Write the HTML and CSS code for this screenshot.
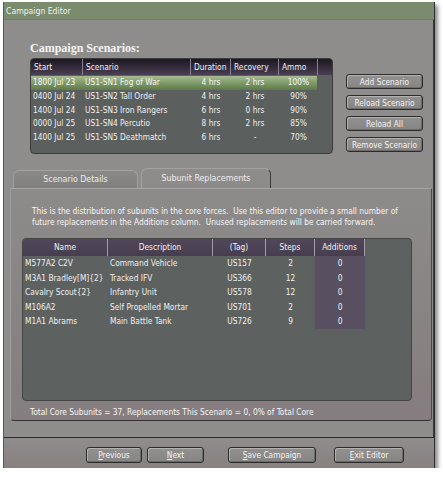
FILE: index.html
```html
<!DOCTYPE html>
<html>
<head>
<meta charset="utf-8">
<title>Campaign Editor</title>
<link rel="stylesheet" href="styles.css">
</head>
<body>
<div class="window">
  <div class="titlebar">Campaign Editor</div>
  <div class="content">
    <div class="top">
      <h1 class="heading">Campaign Scenarios:</h1>
      <div class="list-row">
        <div class="scen-list">
          <div class="srow shead">
            <span>Start</span><span>Scenario</span><span>Duration</span><span>Recovery</span><span>Ammo</span><span></span>
          </div>
          <div class="srow sel">
            <span>1800 Jul 23</span><span>US1-SN1 Fog of War</span><span class="c">4 hrs</span><span class="c">2 hrs</span><span class="c">100%</span><span></span>
          </div>
          <div class="srow">
            <span>0400 Jul 24</span><span>US1-SN2 Tall Order</span><span class="c">4 hrs</span><span class="c">2 hrs</span><span class="c">90%</span><span></span>
          </div>
          <div class="srow">
            <span>1400 Jul 24</span><span>US1-SN3 Iron Rangers</span><span class="c">6 hrs</span><span class="c">0 hrs</span><span class="c">90%</span><span></span>
          </div>
          <div class="srow">
            <span>0000 Jul 25</span><span>US1-SN4 Percutio</span><span class="c">8 hrs</span><span class="c">2 hrs</span><span class="c">85%</span><span></span>
          </div>
          <div class="srow">
            <span>1400 Jul 25</span><span>US1-SN5 Deathmatch</span><span class="c">6 hrs</span><span class="c">-</span><span class="c">70%</span><span></span>
          </div>
        </div>
        <div class="side-buttons">
          <button class="btn">Add Scenario</button>
          <button class="btn">Reload Scenario</button>
          <button class="btn">Reload All</button>
          <button class="btn">Remove Scenario</button>
        </div>
      </div>
    </div>
    <div class="tabs">
      <div class="tab">Scenario Details</div>
      <div class="tab active">Subunit Replacements</div>
    </div>
    <div class="panel">
      <p class="desc">This is the distribution of subunits in the core forces.&nbsp; Use this editor to provide a small number of<br>future replacements in the Additions column.&nbsp; Unused replacements will be carried forward.</p>
      <div class="sub-table">
        <div class="urow uhead">
          <span>Name</span><span>Description</span><span>(Tag)</span><span>Steps</span><span>Additions</span><span class="blank"></span>
        </div>
        <div class="urow">
          <span>M577A2 C2V</span><span>Command Vehicle</span><span class="c">US157</span><span class="c">2</span><span class="c add">0</span><span></span>
        </div>
        <div class="urow">
          <span>M3A1 Bradley[M]{2}</span><span>Tracked IFV</span><span class="c">US366</span><span class="c">12</span><span class="c add">0</span><span></span>
        </div>
        <div class="urow">
          <span>Cavalry Scout{2}</span><span>Infantry Unit</span><span class="c">US578</span><span class="c">12</span><span class="c add">0</span><span></span>
        </div>
        <div class="urow">
          <span>M106A2</span><span>Self Propelled Mortar</span><span class="c">US701</span><span class="c">2</span><span class="c add">0</span><span></span>
        </div>
        <div class="urow">
          <span>M1A1 Abrams</span><span>Main Battle Tank</span><span class="c">US726</span><span class="c">9</span><span class="c add">0</span><span></span>
        </div>
      </div>
      <p class="total">Total Core Subunits = 37, Replacements This Scenario = 0, 0% of Total Core</p>
    </div>
  </div>
  <div class="footer">
    <button class="btn fbtn prev"><u>P</u>revious</button>
    <button class="btn fbtn next"><u>N</u>ext</button>
    <button class="btn fbtn save"><u>S</u>ave Campaign</button>
    <button class="btn fbtn exit"><u>E</u>xit Editor</button>
  </div>
</div>
</body>
</html>
```

FILE: styles.css
```css
* { box-sizing: border-box; }

body {
  margin: 0;
  background: #ffffff;
  font-family: "DejaVu Sans Condensed", "DejaVu Sans", sans-serif;
  font-stretch: condensed;
  font-size: 8.3px;
  color: #eeeeee;
}

.window {
  margin: 2px 0 0 3px;
  width: 432px;
  height: 466px;
  display: flex;
  flex-direction: column;
  background: #8e8d8b;
  border-left: 1px solid #5a5a58;
  border-right: 1px solid #2e2e2e;
  box-shadow: 3px 3px 4px rgba(0, 0, 0, 0.45);
}

.titlebar {
  height: 18px;
  line-height: 18px;
  padding-left: 2px;
  background: #7a8b6e;
  color: #f2f2f2;
  font-size: 8.6px;
  border-bottom: 1px solid #6e7d63;
}

.content {
  flex: 1;
  padding: 0 2px 0 6px;
  border-bottom: 1px solid #2b2b2b;
  box-shadow: inset -1px 0 0 #3a3a3a;
}

.top {
  padding-left: 20px;
}

.heading {
  margin: 21px 0 2px 0;
  height: 15px;
  line-height: 15px;
  font-family: "Liberation Serif", "DejaVu Serif", serif;
  font-stretch: normal;
  font-weight: bold;
  font-size: 12px;
  color: #f4f4f4;
}

.list-row {
  display: flex;
}

.scen-list {
  width: 303px;
  height: 96px;
  background: #5b5f5e;
  border: 1px solid #3c3c3c;
  border-radius: 4px;
  overflow: hidden;
}

.srow {
  display: grid;
  grid-template-columns: 52px 108px 40px 48px 39px 1fr;
  height: 13.8px;
  line-height: 13.8px;
  color: #f0f0f0;
}

.srow span {
  padding-left: 2px;
  white-space: nowrap;
  overflow: hidden;
}

.srow .c {
  padding-left: 0;
  text-align: center;
}

.shead {
  height: 16px;
  line-height: 16px;
  background: linear-gradient(#1c1720, #352c3d 55%, #4b4054);
  color: #f2f2f2;
  margin-bottom: 1px;
}

.shead span {
  padding-left: 3px;
  border-right: 1px solid #8a8093;
}

.shead span:last-child {
  border-right: none;
}

.sel {
  background: linear-gradient(#a7bb92, #7f9a68 50%, #5e7a4a) no-repeat;
  background-size: 286px 100%;
  color: #f6f6f6;
}

.side-buttons {
  margin-left: 13px;
  padding-top: 16px;
  display: flex;
  flex-direction: column;
  gap: 6px;
}

.btn {
  font-family: inherit;
  font-stretch: condensed;
  font-size: 8.3px;
  color: #f2f2f2;
  background: linear-gradient(#939190, #878584);
  border: 1px solid #2c2c2c;
  border-radius: 3px;
  box-shadow: inset 1px 1px 0 #b3b1b0, inset -1px -1px 0 #6c6a6a;
  padding: 0;
  cursor: default;
}

.side-buttons .btn {
  width: 77px;
  height: 15px;
}

.tabs {
  display: flex;
  align-items: flex-end;
  height: 20px;
  margin-top: 14px;
  padding-left: 3px;
  gap: 3px;
}

.tab {
  height: 18px;
  width: 125px;
  line-height: 17px;
  text-align: center;
  font-size: 8.8px;
  color: #ededed;
  background: linear-gradient(#8b8988, #817f7e);
  border: 1px solid #a4a2a1;
  border-bottom: none;
  border-radius: 6px 6px 0 0;
}

.tab.active {
  height: 20px;
  width: 130px;
  line-height: 18px;
  background: #8e8c8b;
  border-right: 1px solid #3a3a3a;
}

.panel {
  height: 233px;
  background: linear-gradient(#8d8b8a, #857d7f);
  border-top: 1px solid #a6a4a3;
  border-left: 1px solid #a09e9d;
  border-right: 1px solid #4a4a4a;
  border-bottom: 1px solid #333333;
  border-radius: 0 0 4px 4px;
  padding: 17px 0 0 11px;
}

.desc {
  margin: 0 0 11px 10px;
  line-height: 10.5px;
  color: #f6f6f6;
  white-space: nowrap;
}

.sub-table {
  width: 390px;
  height: 163px;
  background: #5d6160;
  border: 1px solid #454545;
  border-radius: 4px;
  overflow: hidden;
}

.urow {
  display: grid;
  grid-template-columns: 85px 105px 53px 49px 50px 1fr;
  height: 14.5px;
  line-height: 14.5px;
  color: #f0f0f0;
}

.urow span {
  padding-left: 2px;
  white-space: nowrap;
  overflow: hidden;
}

.urow .c {
  padding-left: 0;
  text-align: center;
}

.urow .add {
  background: #585060;
}

.uhead {
  height: 17px;
  line-height: 17px;
}

.uhead span {
  padding-left: 0;
  text-align: center;
  background: linear-gradient(#51475a, #463d4e);
  color: #f2f2f2;
  border-right: 1px solid #a39bab;
}

.uhead span.blank {
  background: none;
  border-right: none;
}

.total {
  margin: 6px 0 0 8px;
  line-height: 10px;
  color: #f6f6f6;
  white-space: nowrap;
}

.footer {
  height: 30px;
  display: flex;
  align-items: flex-start;
  padding: 9px 0 0 82px;
  background: linear-gradient(#8f8d8c, #87807f);
}

.fbtn {
  height: 16px;
}

.prev { width: 56px; }
.next { width: 57px; margin-left: 5px; }
.save { width: 88px; margin-left: 24px; }
.exit { width: 70px; margin-left: 18px; }
```
